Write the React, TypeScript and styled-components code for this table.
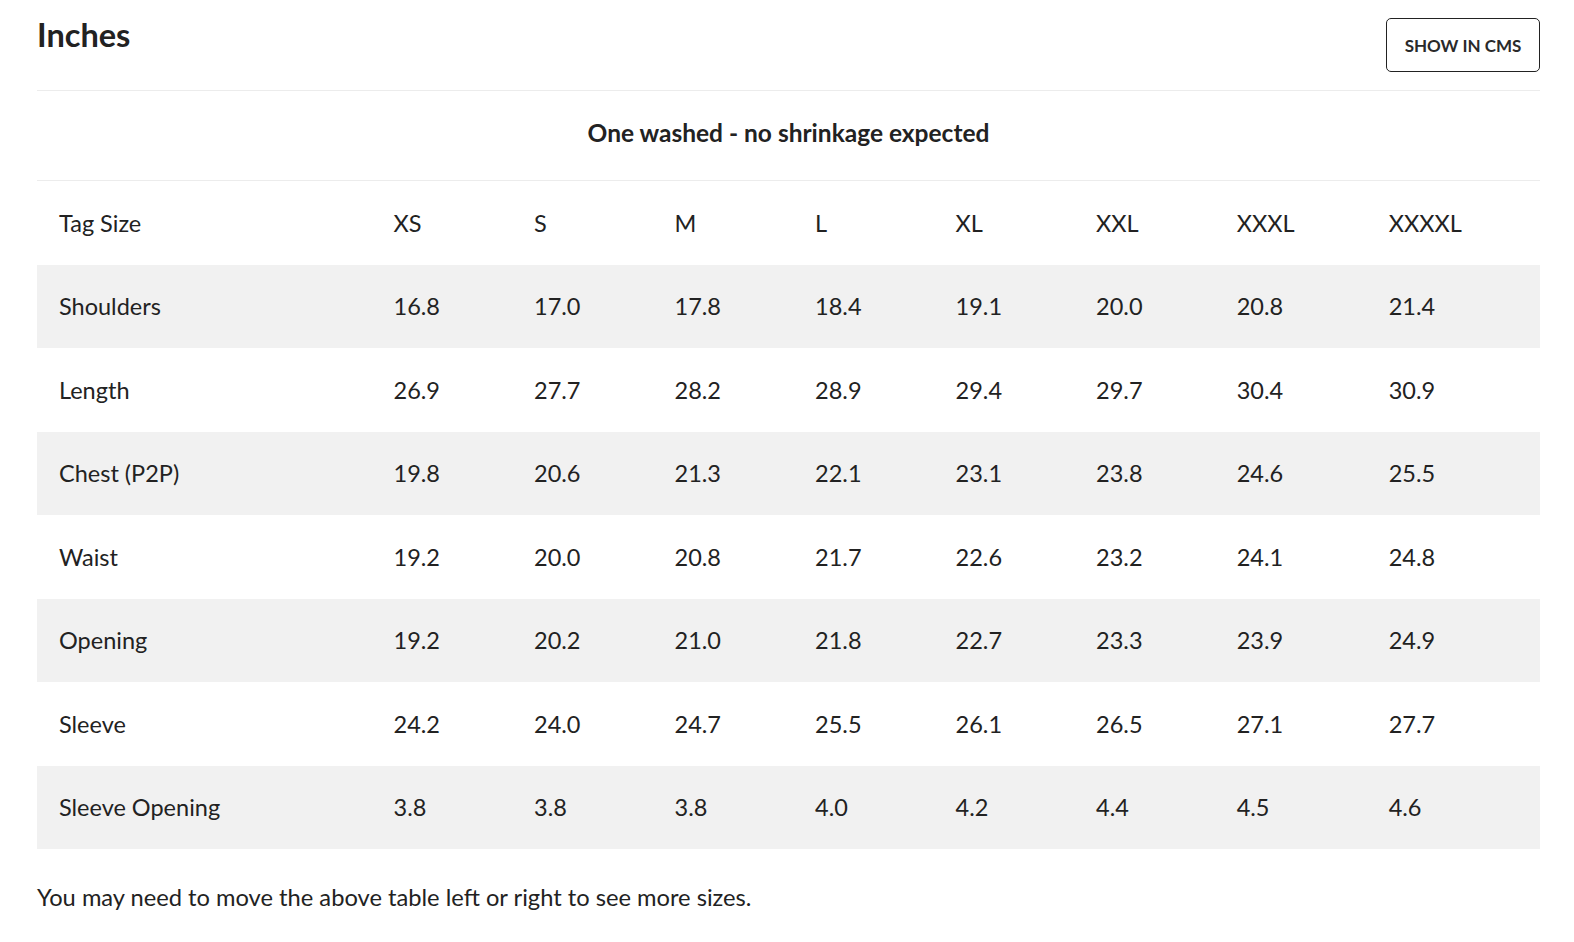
import React from "react";
import styled, { createGlobalStyle } from "styled-components";

const Global = createGlobalStyle`
  html, body { margin: 0; padding: 0; background: #fff; }
  body { font-family: Lato, "Noto Sans", sans-serif; color: #222; }
`;

const Page = styled.div`
  padding: 18px 34px 40px 37px;
`;

const Header = styled.div`
  display: flex;
  justify-content: space-between;
  align-items: flex-start;
  padding-bottom: 18px;
  border-bottom: 1px solid #ececec;
`;

const Title = styled.h2`
  margin: -2px 0 0;
  font-size: 32.5px;
  font-weight: 700;
  line-height: 38px;
  color: #222;
`;

const CmsButton = styled.button`
  height: 54px;
  width: 154px;
  box-sizing: border-box;
  border: 1px solid #222;
  border-radius: 5px;
  background: #fff;
  font-family: Lato, sans-serif;
  font-size: 17px;
  font-weight: 700;
  color: #2a2a2a;
  cursor: pointer;
`;

const Subtitle = styled.div`
  height: 90px;
  box-sizing: border-box;
  padding-bottom: 6px;
  display: flex;
  align-items: center;
  justify-content: center;
  border-bottom: 1px solid #ececec;
  font-size: 24.5px;
  font-weight: 700;
  color: #222;
`;

const Table = styled.table`
  width: 100%;
  table-layout: fixed;
  border-collapse: collapse;
  font-size: 23.5px;
  color: #222;
`;

const Col = styled.col<{ $w: number }>`
  width: ${(p) => p.$w}px;
`;

const Row = styled.tr<{ $shaded: boolean }>`
  height: 83.5px;
  background: ${(p) => (p.$shaded ? "#f1f1f1" : "#fff")};
`;

const Cell = styled.td`
  padding: 0 0 0 22px;
  font-weight: 400;
  text-align: left;
  white-space: nowrap;
`;

const Note = styled.p`
  margin: 30px 0 0;
  font-size: 23.7px;
  line-height: 36px;
  color: #222;
`;

const sizes = ["XS", "S", "M", "L", "XL", "XXL", "XXXL", "XXXXL"];
const widths = [334.5, 140.5, 140.5, 140.5, 140.5, 140.5, 140.5, 152, 173.3];

const rows: [string, string[]][] = [
  ["Shoulders", ["16.8", "17.0", "17.8", "18.4", "19.1", "20.0", "20.8", "21.4"]],
  ["Length", ["26.9", "27.7", "28.2", "28.9", "29.4", "29.7", "30.4", "30.9"]],
  ["Chest (P2P)", ["19.8", "20.6", "21.3", "22.1", "23.1", "23.8", "24.6", "25.5"]],
  ["Waist", ["19.2", "20.0", "20.8", "21.7", "22.6", "23.2", "24.1", "24.8"]],
  ["Opening", ["19.2", "20.2", "21.0", "21.8", "22.7", "23.3", "23.9", "24.9"]],
  ["Sleeve", ["24.2", "24.0", "24.7", "25.5", "26.1", "26.5", "27.1", "27.7"]],
  ["Sleeve Opening", ["3.8", "3.8", "3.8", "4.0", "4.2", "4.4", "4.5", "4.6"]],
];

export default function App() {
  return (
    <Page>
      <Global />
      <Header>
        <Title>Inches</Title>
        <CmsButton>SHOW IN CMS</CmsButton>
      </Header>
      <Subtitle>One washed - no shrinkage expected</Subtitle>
      <Table>
        <colgroup>
          {widths.map((w, i) => (
            <Col key={i} $w={w} />
          ))}
        </colgroup>
        <thead>
          <Row $shaded={false}>
            <Cell as="th">Tag Size</Cell>
            {sizes.map((s) => (
              <Cell as="th" key={s}>
                {s}
              </Cell>
            ))}
          </Row>
        </thead>
        <tbody>
          {rows.map(([label, vals], i) => (
            <Row key={label} $shaded={i % 2 === 0}>
              <Cell>{label}</Cell>
              {vals.map((v, j) => (
                <Cell key={j}>{v}</Cell>
              ))}
            </Row>
          ))}
        </tbody>
      </Table>
      <Note>You may need to move the above table left or right to see more sizes.</Note>
    </Page>
  );
}
